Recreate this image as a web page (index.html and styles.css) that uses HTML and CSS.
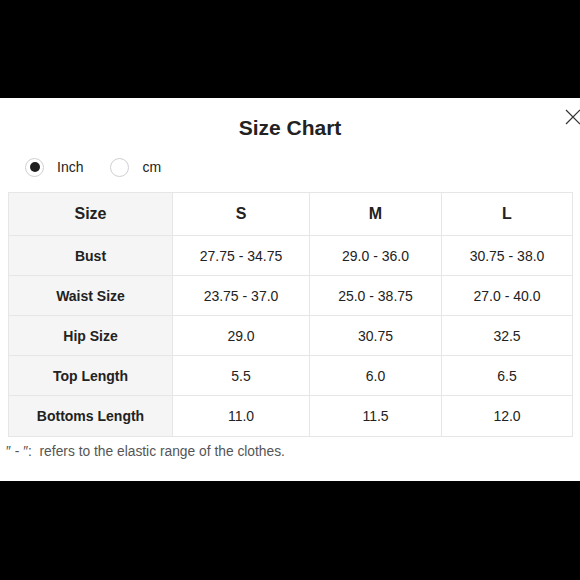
FILE: index.html
```html
<!DOCTYPE html>
<html>
<head>
<meta charset="utf-8">
<link rel="stylesheet" href="styles.css">
</head>
<body>
<div class="topbar"></div>
<div class="panel">
  <svg class="close" width="16" height="16" viewBox="0 0 16 16"><path d="M1 1 L15 15 M15 1 L1 15" stroke="#333" stroke-width="1.2" fill="none"/></svg>
  <h1 class="title">Size Chart</h1>
  <div class="units">
    <label class="unit"><span class="radio checked"></span>Inch</label>
    <label class="unit"><span class="radio"></span>cm</label>
  </div>
  <table class="chart">
    <colgroup>
      <col class="c1"><col class="c2"><col class="c3"><col class="c4">
    </colgroup>
    <tr class="head"><th class="label">Size</th><th>S</th><th>M</th><th>L</th></tr>
    <tr><th class="label">Bust</th><td>27.75 - 34.75</td><td>29.0 - 36.0</td><td>30.75 - 38.0</td></tr>
    <tr><th class="label">Waist Size</th><td>23.75 - 37.0</td><td>25.0 - 38.75</td><td>27.0 - 40.0</td></tr>
    <tr><th class="label">Hip Size</th><td>29.0</td><td>30.75</td><td>32.5</td></tr>
    <tr><th class="label">Top Length</th><td>5.5</td><td>6.0</td><td>6.5</td></tr>
    <tr class="last"><th class="label">Bottoms Length</th><td>11.0</td><td>11.5</td><td>12.0</td></tr>
  </table>
  <p class="note">″ - ″:&nbsp; refers to the elastic range of the clothes.</p>
</div>
</body>
</html>
```
FILE: styles.css
```css
html, body {
  margin: 0;
  padding: 0;
  background: #000;
  overflow: hidden;
  font-family: "Liberation Sans", Arial, sans-serif;
  color: #222;
}
.topbar {
  height: 98px;
}
.panel {
  position: relative;
  background: #fff;
  height: 383px;
  box-sizing: border-box;
  padding: 16px 8px 0 8px;
}
.close {
  position: absolute;
  left: 565px;
  top: 11px;
}
.title {
  margin: 0;
  text-align: center;
  font-size: 21px;
  font-weight: bold;
  line-height: 28px;
  color: #222;
}
.units {
  display: flex;
  align-items: center;
  gap: 27px;
  margin: 12px 0 0 17px;
  height: 26px;
}
.unit {
  display: flex;
  align-items: center;
  gap: 13px;
  font-size: 14px;
  color: #222;
}
.radio {
  width: 19px;
  height: 19px;
  border: 1px solid #d0d0d0;
  border-radius: 50%;
  box-sizing: border-box;
  display: flex;
  align-items: center;
  justify-content: center;
  background: #fff;
}
.radio.checked::after {
  content: "";
  width: 10px;
  height: 10px;
  border-radius: 50%;
  background: #1e1e1e;
}
.chart {
  margin-top: 12px;
  width: 564px;
  border-collapse: collapse;
  table-layout: fixed;
  font-size: 14px;
}
.c1 { width: 164px; }
.c2 { width: 137px; }
.c3 { width: 132px; }
.c4 { width: 131px; }
.chart th, .chart td {
  border: 1px solid #e6e6e6;
  text-align: center;
  height: 39px;
  padding: 0;
  color: #222;
}
.chart td { font-weight: normal; }
.chart .label {
  background: #f5f5f5;
  font-weight: bold;
}
.chart .head th {
  height: 42px;
  font-size: 16px;
  font-weight: bold;
}
.chart .last th, .chart .last td {
  height: 40px;
}
.note {
  margin: 7px 0 0 -2px;
  font-size: 13.8px;
  line-height: 16px;
  color: #555;
}
```
